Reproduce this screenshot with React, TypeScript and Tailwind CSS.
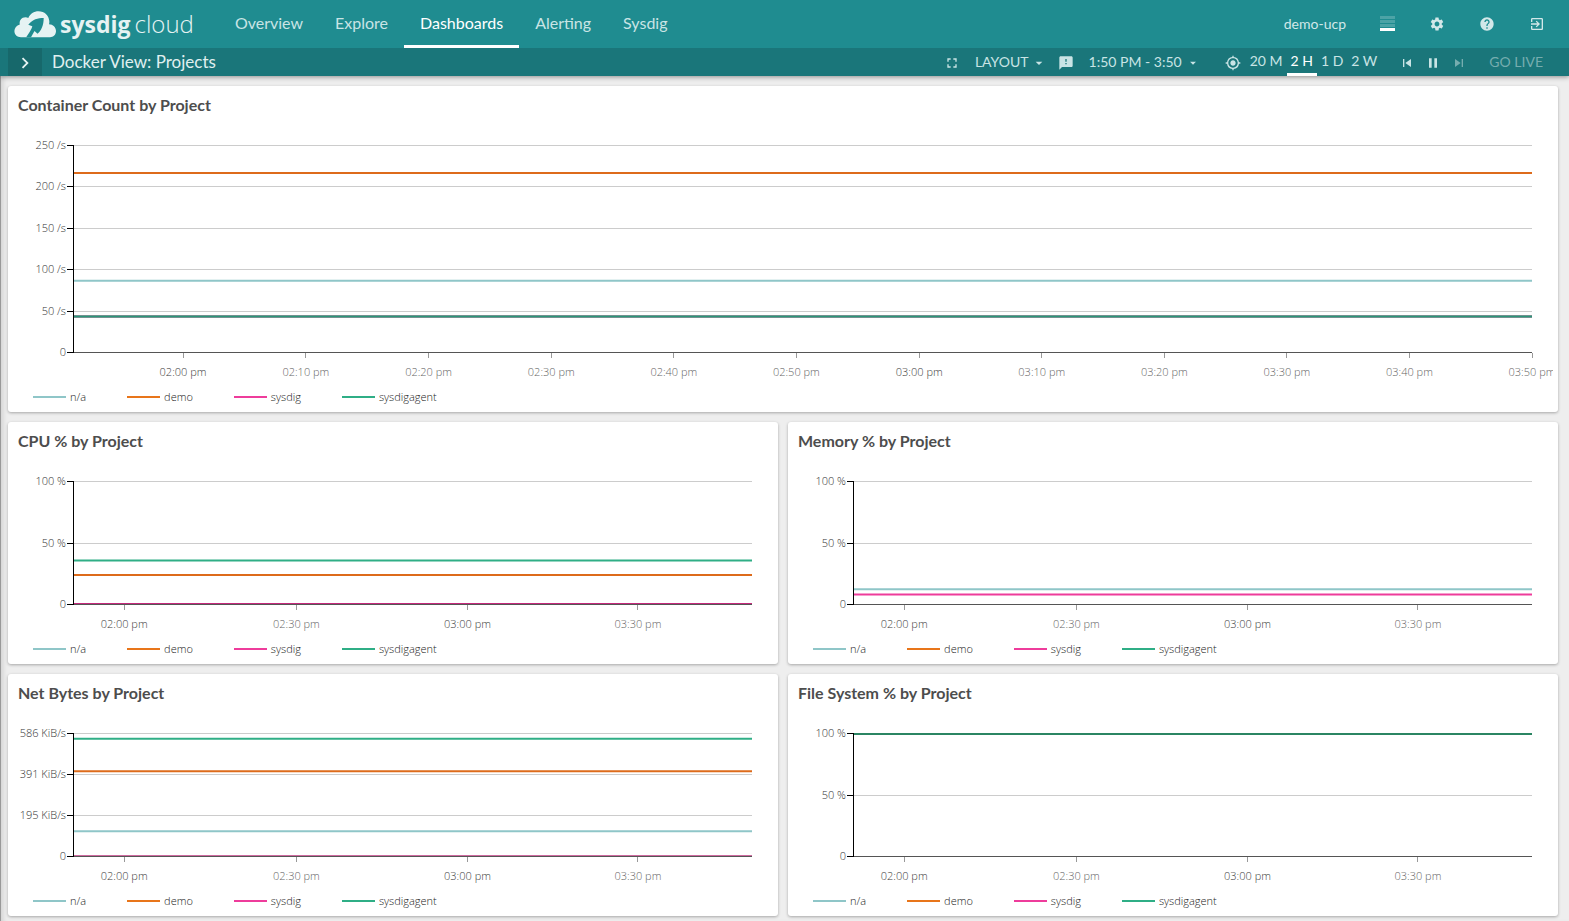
import React from "react";
import {
  MdArrowDropDown,
  MdChevronRight,
  MdExitToApp,
  MdFeedback,
  MdFullscreen,
  MdHelp,
  MdMyLocation,
  MdPause,
  MdSettings,
  MdSkipNext,
  MdSkipPrevious,
} from "react-icons/md";

type Tick = { label: string; at: number; strong?: boolean };
type Mark = { label: string; y: number };
type Series = { color: string; y: number; width?: number };

const PLOT_TOP = 12;

const longTicks: Tick[] = [
  { label: "02:00 pm", at: 7.54, strong: true },
  { label: "02:10 pm", at: 15.96 },
  { label: "02:20 pm", at: 24.37 },
  { label: "02:30 pm", at: 32.78 },
  { label: "02:40 pm", at: 41.18 },
  { label: "02:50 pm", at: 49.58 },
  { label: "03:00 pm", at: 58, strong: true },
  { label: "03:10 pm", at: 66.4 },
  { label: "03:20 pm", at: 74.8 },
  { label: "03:30 pm", at: 83.2 },
  { label: "03:40 pm", at: 91.6 },
  { label: "03:50 pm", at: 100 },
];

const shortTicks: Tick[] = [
  { label: "02:00 pm", at: 7.54, strong: true },
  { label: "02:30 pm", at: 32.9 },
  { label: "03:00 pm", at: 58.1, strong: true },
  { label: "03:30 pm", at: 83.2 },
];

const percentMarks: Mark[] = [
  { label: "100 %", y: 0 },
  { label: "50 %", y: 62 },
  { label: "0", y: 123 },
];

const legend = [
  { name: "n/a", color: "#8fc6c8" },
  { name: "demo", color: "#e8751a" },
  { name: "sysdig", color: "#ee3c9b" },
  { name: "sysdigagent", color: "#2fae86" },
];

function Chart({ title, height, marks, ticks, series }: { title: string; height: number; marks: Mark[]; ticks: Tick[]; series: Series[] }) {
  return (
    <section className="min-w-0 rounded-[3px] bg-white pb-[7px] shadow-[0_1px_3px_rgba(0,0,0,0.3)]">
      <h2 className="px-[10px] pt-[9px] text-[16px] leading-[20px] font-bold text-[#4d4d4d]">{title}</h2>
      <div className="mr-[5px] overflow-hidden pt-[18px] pr-[21px] pl-[65px]">
        <svg className="block w-full overflow-visible font-['Open_Sans',sans-serif] text-[11px] font-light" height={height + PLOT_TOP + 37} role="img" aria-label={title}>
          <g transform={`translate(0 ${PLOT_TOP})`}>
            {marks.map((m) => (
              <g key={m.label}>
                <line x1="0" x2="100%" y1={m.y + 0.5} y2={m.y + 0.5} stroke="#cccccc" shapeRendering="crispEdges" />
                <text x="-7" y={m.y + 4} textAnchor="end" fill="#333333">
                  {m.label}
                </text>
              </g>
            ))}
            {series.map((s, i) => (
              <line key={i} x1="0" x2="100%" y1={s.y} y2={s.y} stroke={s.color} strokeWidth={s.width ?? 2} />
            ))}
            <line x1="0" x2="100%" y1={height + 0.5} y2={height + 0.5} stroke="#555555" shapeRendering="crispEdges" />
            {marks.map((m) => (
              <line key={m.label} x1="-6" x2="1" y1={m.y + 0.5} y2={m.y + 0.5} stroke="#000000" shapeRendering="crispEdges" />
            ))}
            <line x1="0.5" x2="0.5" y1="0" y2={height + 1} stroke="#000000" shapeRendering="crispEdges" />
            {ticks.map((t) => (
              <g key={t.label}>
                <line x1={`${t.at}%`} x2={`${t.at}%`} y1={height + 1} y2={height + 6} stroke="#999999" shapeRendering="crispEdges" />
                <text x={`${t.at}%`} y={height + 24} textAnchor="middle" fill={t.strong ? "#3d3d3d" : "#666666"}>
                  {t.label}
                </text>
              </g>
            ))}
          </g>
        </svg>
      </div>
      <ul className="flex gap-[41px] pl-[25px] font-['Open_Sans',sans-serif] text-[11px] leading-[16px] font-light text-[#222]">
        {legend.map((l) => (
          <li key={l.name} className="flex items-center gap-1">
            <svg width="33" height="2" aria-hidden="true">
              <rect width="33" height="2" fill={l.color} />
            </svg>
            {l.name}
          </li>
        ))}
      </ul>
    </section>
  );
}

function Logo() {
  return (
    <a href="#home" className="flex items-center text-[#e6f3f3]" aria-label="sysdig cloud">
      <svg width="43" height="27" viewBox="0 0 43 27" className="mr-[3px]" aria-hidden="true">
        <path
          d="M7 26.200C3 26.200 .400 23.500 .400 20C.400 17.200 2.500 14.500 5.800 13.500C5 9.500 7.500 6.200 11.500 6.200C12.600 6.200 13.500 6.500 14.300 7C16 3 20 .300 24.500 .300C30.500 .300 34.800 4.500 35.300 10C35.400 11.300 35.300 12.300 35 13.200C39 13.300 42 16.300 42 20C42 23.800 39.300 26.200 36 26.200Z"
          fill="currentColor"
        />
        <path d="M29.700 7C24 7 18.300 8.300 14.300 13.800L18.300 15.200C17.800 17.500 16 20.500 12.200 26.300H17L20.500 20L23.500 22.800C27.500 19.500 29.700 14 29.700 7Z" fill="#1f8c90" />
      </svg>
      <span className="font-['Open_Sans',sans-serif] text-[23px] leading-[30px] font-bold">sysdig</span>
      <span className="ml-1 font-['Open_Sans',sans-serif] text-[24px] leading-[30px] font-light">cloud</span>
    </a>
  );
}

const navItems = ["Overview", "Explore", "Dashboards", "Alerting", "Sysdig"];
const ranges = ["20 M", "2 H", "1 D", "2 W"];

export default function App() {
  return (
    <div className="min-h-screen bg-[#eeeeee] font-[Lato,sans-serif]">
      <header className="relative text-[#c9e4e5] shadow-[0_1px_5px_rgba(0,0,0,0.4)]">
        <div className="flex h-12 items-center justify-between bg-[#1f8c90] pl-[14px]">
          <div className="flex h-full items-center">
            <Logo />
            <nav className="ml-[25px] flex h-full text-[16px]">
              {navItems.map((n) => (
                <a
                  key={n}
                  href={`#${n.toLowerCase()}`}
                  className={
                    n === "Dashboards"
                      ? "flex items-center border-b-[3px] border-white px-4 text-white"
                      : "flex items-center border-b-[3px] border-transparent px-4"
                  }
                >
                  {n}
                </a>
              ))}
            </nav>
          </div>
          <div className="flex items-center gap-[34px] pr-[24px] text-[14px] text-[#d2e8e9]">
            <span className="pb-[2px]">demo-ucp</span>
            <button aria-label="Environments" className="flex w-[15px] flex-col gap-px pb-[2px]">
              <span className="h-[3px] w-full bg-[#4ca3a6]" />
              <span className="h-[3px] w-full bg-[#4ca3a6]" />
              <span className="h-[3px] w-full bg-[#4ca3a6]" />
              <span className="h-[3px] w-full bg-white" />
            </button>
            <button aria-label="Settings">
              <MdSettings size={16} />
            </button>
            <button aria-label="Help">
              <MdHelp size={16} />
            </button>
            <button aria-label="Sign out">
              <MdExitToApp size={16} />
            </button>
          </div>
        </div>
        <div className="flex h-7 items-center justify-between bg-[#1a767a] pl-2">
          <div className="flex h-full items-center">
            <button aria-label="Open dashboard list" className="flex h-full w-[34px] items-center justify-center bg-[#17686b] pt-[2px] text-[#e6f3f3]">
              <MdChevronRight size={22} />
            </button>
            <h1 className="ml-[10px] text-[17px] leading-[20px] text-[#e0f0f0]">Docker View: Projects</h1>
          </div>
          <div className="flex h-full items-center pt-[2px] pr-[26px] text-[14px]">
            <button aria-label="Full screen" className="mr-[15px]">
              <MdFullscreen size={16} />
            </button>
            <button className="mr-[11px] flex items-center gap-[2px]">
              <span className="pb-[4px]">LAYOUT</span>
              <MdArrowDropDown size={16} />
            </button>
            <button aria-label="Events" className="mr-[15px]">
              <MdFeedback size={16} />
            </button>
            <button className="mr-[25px] flex items-center gap-[4px]">
              <span className="pb-[4px]">1:50 PM - 3:50</span>
              <MdArrowDropDown size={14} />
            </button>
            <button aria-label="Center on now" className="mr-[5px]">
              <MdMyLocation size={16} />
            </button>
            {ranges.map((r) => (
              <button
                key={r}
                className={r === "2 H" ? "h-full border-b-[3px] border-white px-1 pb-[2px] text-white" : "h-full border-b-[3px] border-transparent px-1 pb-[2px]"}
              >
                {r}
              </button>
            ))}
            <button aria-label="Previous" className="ml-[18px]">
              <MdSkipPrevious size={16} />
            </button>
            <button aria-label="Pause" className="ml-[10px]">
              <MdPause size={16} />
            </button>
            <button aria-label="Next" className="ml-[10px] text-[#76adaf]">
              <MdSkipNext size={16} />
            </button>
            <button className="ml-[22px] pb-[4px] text-[#76adaf]">GO LIVE</button>
          </div>
        </div>
      </header>
      <main className="grid min-h-[calc(100vh-76px)] grid-cols-2 content-start gap-[10px] border-l border-[#999999] pt-[10px] pr-[11px] pb-[5px] pl-[7px] shadow-[inset_5px_0_5px_-3px_rgba(0,0,0,0.12)]">
        <div className="col-span-2 grid">
          <Chart
            title="Container Count by Project"
            height={207}
            marks={[
              { label: "250 /s", y: 0 },
              { label: "200 /s", y: 41 },
              { label: "150 /s", y: 83 },
              { label: "100 /s", y: 124 },
              { label: "50 /s", y: 166 },
              { label: "0", y: 207 },
            ]}
            ticks={longTicks}
            series={[
              { color: "#dd6b1b", y: 28 },
              { color: "#8fc6c8", y: 135.7 },
              { color: "#8c8f98", y: 171.5, width: 3 },
              { color: "#2a9779", y: 171.5, width: 1.6 },
            ]}
          />
        </div>
        <Chart
          title="CPU % by Project"
          height={123}
          marks={percentMarks}
          ticks={shortTicks}
          series={[
            { color: "#2fae86", y: 79.5 },
            { color: "#dd6b1b", y: 94 },
            { color: "#c4297c", y: 123 },
          ]}
        />
        <Chart
          title="Memory % by Project"
          height={123}
          marks={percentMarks}
          ticks={shortTicks}
          series={[
            { color: "#8fc6c8", y: 108.3 },
            { color: "#ee3c9b", y: 113.4 },
          ]}
        />
        <Chart
          title="Net Bytes by Project"
          height={123}
          marks={[
            { label: "586 KiB/s", y: 0 },
            { label: "391 KiB/s", y: 41 },
            { label: "195 KiB/s", y: 82 },
            { label: "0", y: 123 },
          ]}
          ticks={shortTicks}
          series={[
            { color: "#2fae86", y: 5.7 },
            { color: "#dd6b1b", y: 38.3 },
            { color: "#8fc6c8", y: 98.2 },
            { color: "#cf6ba0", y: 123 },
          ]}
        />
        <Chart title="File System % by Project" height={123} marks={percentMarks} ticks={shortTicks} series={[{ color: "#2b8563", y: 1 }]} />
      </main>
    </div>
  );
}
